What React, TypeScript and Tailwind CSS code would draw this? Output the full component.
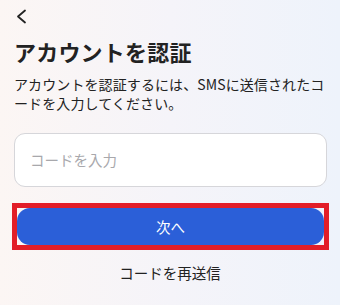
import React from "react";

export default function App() {
  return (
    <div
      className="w-[340px] h-[305px] overflow-hidden bg-gradient-to-r from-[#fcf6f4] via-[#f5f4f9] to-[#eef3fb] text-[#222222]"
      style={{ fontFamily: '"Noto Sans CJK JP", "Noto Sans", sans-serif' }}
    >
      <div className="flex flex-col pl-[14px] pr-[13px]">
        <div className="pt-[9px] pl-[1px] h-[24px]">
          <svg width="13" height="15" viewBox="0 0 13 15" fill="none">
            <path d="M10 1.5 L3 7.5 L10 13.5" stroke="#222" strokeWidth="1.8" strokeLinecap="round" strokeLinejoin="round" />
          </svg>
        </div>
        <h1 className="mt-[12px] text-[22px] leading-[30px] font-bold tracking-[0.2px]">アカウントを認証</h1>
        <p className="mt-[9px] text-[14px] leading-[19px] tracking-[0.1px]">
          アカウントを認証するには、SMSに送信されたコードを入力してください。
        </p>
        <div className="mt-[20px] h-[54px] rounded-[11px] border border-[#d6d6da] bg-white flex items-center pl-[15px] text-[14.5px] text-[#a8a8ac]">
          コードを入力
        </div>
        <div className="mt-[16px] -ml-[2px] -mr-[2px] border-[5px] border-[#e21e28] h-[47px]">
          <div className="h-full rounded-[13px] bg-[#2b5fd8] flex items-center justify-center text-white text-[14.5px]">
            次へ
          </div>
        </div>
        <div className="mt-[13px] text-center text-[14.5px] leading-[20px] pr-[1px]">コードを再送信</div>
      </div>
    </div>
  );
}
